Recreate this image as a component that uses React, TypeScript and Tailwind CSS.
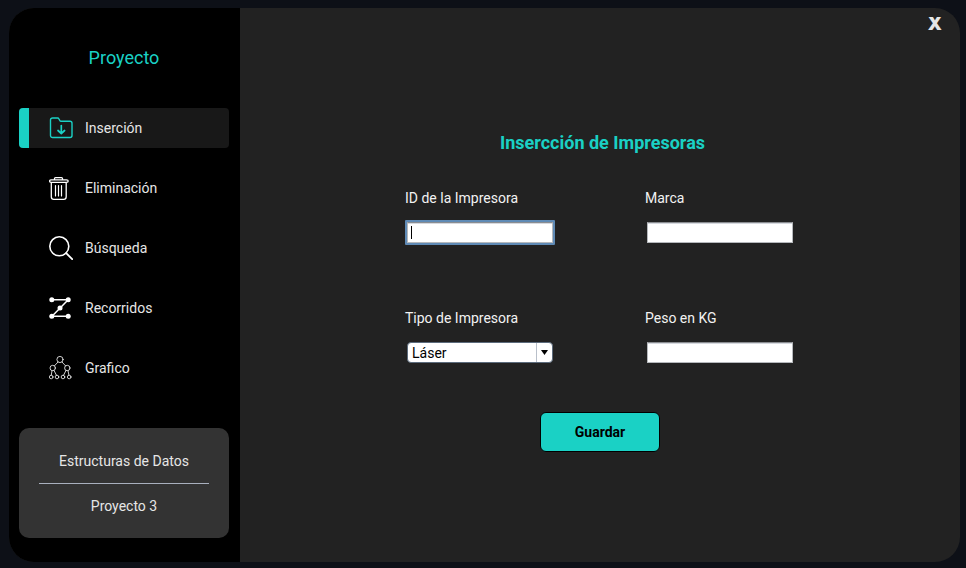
import type { ReactNode } from "react";

type IconProps = { children: ReactNode };

function Icon({ children }: IconProps) {
  return (
    <svg
      className="size-6 shrink-0"
      viewBox="0 0 24 24"
      fill="none"
      stroke="currentColor"
      strokeLinecap="round"
      strokeLinejoin="round"
      aria-hidden="true"
    >
      {children}
    </svg>
  );
}

const menu = [
  {
    label: "Inserción",
    icon: (
      <Icon>
        <path
          strokeWidth="1.4"
          d="M3.5 2H8.600q.9 0 1.300.8l.9 1.700q.4.8 1.200.8h9a2 2 0 0 1 2 2v12.200a2 2 0 0 1-2 2H3.500a2 2 0 0 1-2-2V4a2 2 0 0 1 2-2Z"
        />
        <path strokeWidth="1.7" d="M12.300 9.500v8M9 14.500l3.300 3 3.300-3" />
      </Icon>
    ),
  },
  {
    label: "Eliminación",
    icon: (
      <Icon>
        <path
          strokeWidth="1.3"
          d="M5.500 3.800V2.600q0-1 1-1h6q1 0 1 1v1.200M2 3.800h15.500q1.700 0 1.700 1.300t-1.700 1.300H2Q.600 6.400.600 5.100T2 3.800ZM2.300 6.800v13.900q0 2.600 2.500 2.600h9.900q2.500 0 2.500-2.600V6.800"
        />
        <path strokeWidth="1.2" d="M6.500 9.500v10.500M9.500 9.500v10.500M12.500 9.500v10.500" />
      </Icon>
    ),
  },
  {
    label: "Búsqueda",
    icon: (
      <Icon>
        <circle cx="10.300" cy="10.300" r="9.500" strokeWidth="1.600" />
        <path strokeWidth="1.800" d="m17.200 17.200 6 6" />
      </Icon>
    ),
  },
  {
    label: "Recorridos",
    icon: (
      <Icon>
        <path strokeWidth="1.500" d="M3 3.700h16.200L3 20.200h16.200" />
        <g fill="currentColor" stroke="none">
          <circle cx="2.800" cy="3.700" r="2.500" />
          <circle cx="19.200" cy="3.700" r="2.500" />
          <circle cx="11" cy="12" r="2.500" />
          <circle cx="2.800" cy="20.200" r="2.500" />
          <circle cx="19.200" cy="20.200" r="2.500" />
        </g>
      </Icon>
    ),
  },
  {
    label: "Grafico",
    icon: (
      <Icon>
        <g strokeWidth="0.800">
          <circle cx="11" cy="3.500" r="3.100" />
          <circle cx="3.700" cy="12" r="2.700" />
          <circle cx="18.300" cy="12" r="2.700" />
          <circle cx="2.200" cy="21" r="1.800" />
          <circle cx="8" cy="21" r="1.800" />
          <circle cx="14" cy="21" r="1.800" />
          <circle cx="20.200" cy="21" r="1.800" />
          <path d="M9 6 5.500 9.800M13 6l3.500 3.800M3 14.600l-.700 4.500M5 14.400l2.400 4.800M17 14.400l-2.400 4.800M19 14.600l.900 4.500" />
        </g>
      </Icon>
    ),
  },
];

const box =
  "h-[21px] w-full border border-[#b5b8bc] border-t-[#8a8c90] bg-white text-sm text-black outline-none shadow-[inset_0_1px_0_#d6d9df]";

export default function App() {
  return (
    <div className="h-screen min-h-[568px] bg-[#0d1017] pt-2 pr-[6px] pb-[6px] pl-[9px] font-[Roboto,sans-serif] text-sm text-[#e6e6e6]">
      <div className="flex h-full overflow-hidden rounded-[25px] bg-[#222222]">
        <aside className="flex w-[231px] shrink-0 flex-col bg-black pr-[11px] pl-[10px]">
          <h1 className="flex h-[100px] items-center justify-center text-lg text-[#1ad1c5]">
            Proyecto
          </h1>
          <nav className="flex flex-col gap-5">
            {menu.map((item, i) => (
              <button
                key={item.label}
                type="button"
                aria-current={i === 0 ? "page" : undefined}
                className={
                  i === 0
                    ? "flex h-10 items-center overflow-hidden rounded bg-[#181818]"
                    : "flex h-10 items-center rounded"
                }
              >
                <span
                  className={
                    i === 0
                      ? "mr-5 h-full w-[10px] bg-[#1ad1c5]"
                      : "mr-5 w-[10px]"
                  }
                />
                <span className={i === 0 ? "text-[#1ad1c5]" : "text-white"}>
                  {item.icon}
                </span>
                <span className="ml-3">{item.label}</span>
              </button>
            ))}
          </nav>
          <footer className="mt-10 flex h-[110px] flex-col items-center rounded-[10px] bg-[#333333] pt-[23px]">
            <p>Estructuras de Datos</p>
            <hr className="my-3 w-[170px] border-[#a9b0be]" />
            <p>Proyecto 3</p>
          </footer>
        </aside>

        <main className="flex min-w-0 flex-1 flex-col">
          <div className="flex h-8 justify-end pr-[18px]">
            <button
              type="button"
              aria-label="Cerrar"
              className="font-[Inter,sans-serif] text-lg font-black"
            >
              X
            </button>
          </div>
          <form
            className="mt-[89px] flex flex-col items-center text-[#f2f2f2]"
            onSubmit={(e) => e.preventDefault()}
          >
            <h2 className="pl-[5px] text-lg font-bold text-[#1ad1c5]">
              Insercción de Impresoras
            </h2>
            <div className="mt-[31px] grid grid-cols-[150px_150px] gap-x-[90px] gap-y-[63px]">
              <div>
                <label htmlFor="id" className="block">
                  ID de la Impresora
                </label>
                <div className="relative mt-3 flex h-[25px] items-center rounded-[1px] border-2 border-[#5f8ab5]">
                  <input
                    id="id"
                    type="text"
                    className={box + " caret-transparent"}
                  />
                  <span className="absolute left-1 h-[13px] w-px bg-black" />
                </div>
              </div>
              <div>
                <label htmlFor="marca" className="block">
                  Marca
                </label>
                <div className="mt-3 flex h-[25px] items-center px-[2px]">
                  <input id="marca" type="text" className={box} />
                </div>
              </div>
              <div>
                <label htmlFor="tipo" className="block">
                  Tipo de Impresora
                </label>
                <div className="relative mt-3 flex h-[25px] items-center px-[2px]">
                  <select
                    id="tipo"
                    className="h-[21px] w-full appearance-none rounded border border-[#5c6b7c] bg-white pl-1 text-sm leading-4 text-black"
                  >
                    <option>Láser</option>
                  </select>
                  <span className="pointer-events-none absolute right-[3px] flex h-[19px] w-4 items-center justify-center border-l border-[#b9c0ca]">
                    <svg
                      className="h-[5px] w-[7px] text-black"
                      viewBox="0 0 7 5"
                      fill="currentColor"
                      aria-hidden="true"
                    >
                      <path d="M0 0h7L3.500 5Z" />
                    </svg>
                  </span>
                </div>
              </div>
              <div>
                <label htmlFor="peso" className="block">
                  Peso en KG
                </label>
                <div className="mt-3 flex h-[25px] items-center px-[2px]">
                  <input id="peso" type="text" className={box} />
                </div>
              </div>
            </div>
            <button
              type="submit"
              className="mt-[47px] h-10 w-[120px] rounded-md border border-black bg-[#1ad1c5] font-bold text-black"
            >
              Guardar
            </button>
          </form>
        </main>
      </div>
    </div>
  );
}
